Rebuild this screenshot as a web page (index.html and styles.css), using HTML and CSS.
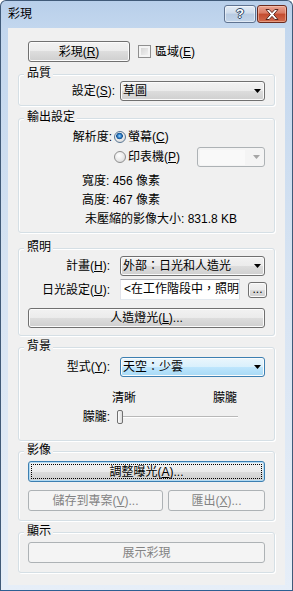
FILE: index.html
```html
<!DOCTYPE html>
<html lang="zh-Hant">
<head>
  <meta charset="UTF-8" />
  <title>彩現</title>
  <link rel="stylesheet" href="styles.css">
</head>
<body>

<div class="window">
  <div class="titlebar">
    <span class="title">彩現</span>
    <div class="caption-btns">
      <span class="cap-btn cap-help"><span class="help-glyph">?</span></span>
      <span class="cap-btn cap-close">
        <svg viewBox="0 0 14 11" width="14" height="11">
          <path d="M1 0.5h3.2L7 3.6 9.8 0.5H13L8.7 5.5 13 10.5H9.8L7 7.4 4.2 10.5H1l4.3-5z" fill="#fff" stroke="#4a1a12" stroke-width="0.9" stroke-linejoin="round"/>
        </svg>
      </span>
    </div>
  </div>

  <div class="client">
    <div class="top-row">
      <button class="btn btn-render">彩現(<u>R</u>)</button>
      <span class="checkbox"></span>
      <span class="check-text">區域(<u>E</u>)</span>
    </div>

    <!-- 品質 -->
    <section class="group group-quality">
      <div class="group-title">品質</div>
      <div class="field-row">
        <span class="label">設定(<u>S</u>):</span>
        <div class="combo">
          <span>草圖</span>
          <svg class="arrow" viewBox="0 0 7 4"><path d="M0 0h7L3.5 4z"/></svg>
        </div>
      </div>
    </section>

    <!-- 輸出設定 -->
    <section class="group group-output">
      <div class="group-title">輸出設定</div>
      <div class="res-row">
        <span class="res-label">解析度:</span>
        <span class="radio checked"></span>
        <span class="radio-text">螢幕(<u>C</u>)</span>
      </div>
      <div class="res-row">
        <span class="res-label"></span>
        <span class="radio"></span>
        <span class="radio-text">印表機(<u>P</u>)</span>
        <div class="combo combo-disabled">
          <span class="combo-well"></span>
          <svg class="arrow" viewBox="0 0 7 4"><path d="M0 0h7L3.5 4z"/></svg>
        </div>
      </div>
      <div class="info-line info-size">寬度: 456 像素</div>
      <div class="info-line info-size">高度: 467 像素</div>
      <div class="info-line info-total">未壓縮的影像大小: 831.8 KB</div>
    </section>

    <!-- 照明 -->
    <section class="group group-light">
      <div class="group-title">照明</div>
      <div class="field-row">
        <span class="label">計畫(<u>H</u>):</span>
        <div class="combo">
          <span>外部：日光和人造光</span>
          <svg class="arrow" viewBox="0 0 7 4"><path d="M0 0h7L3.5 4z"/></svg>
        </div>
      </div>
      <div class="field-row row-sun">
        <span class="label">日光設定(<u>U</u>):</span>
        <div class="sun-field">
          <div class="textbox">&lt;在工作階段中，照明</div>
          <button class="btn btn-dots">...</button>
        </div>
      </div>
      <button class="btn btn-wide btn-artificial">人造燈光(<u>L</u>)...</button>
    </section>

    <!-- 背景 -->
    <section class="group group-bg">
      <div class="group-title">背景</div>
      <div class="field-row">
        <span class="label">型式(<u>Y</u>):</span>
        <div class="combo combo-focus">
          <span>天空：少雲</span>
          <svg class="arrow" viewBox="0 0 7 4"><path d="M0 0h7L3.5 4z"/></svg>
        </div>
      </div>
      <div class="slider-labels">
        <span>清晰</span>
        <span>朦朧</span>
      </div>
      <div class="slider-row">
        <span class="slider-label">朦朧:</span>
        <div class="slider"><span class="thumb"></span></div>
      </div>
    </section>

    <!-- 影像 -->
    <section class="group group-image">
      <div class="group-title">影像</div>
      <button class="btn btn-wide btn-default">調整曝光(<u>A</u>)...</button>
      <div class="btn-pair">
        <button class="btn btn-disabled btn-save">儲存到專案(<u>V</u>)...</button>
        <button class="btn btn-disabled btn-export">匯出(<u>X</u>)...</button>
      </div>
    </section>

    <!-- 顯示 -->
    <section class="group group-show">
      <div class="group-title">顯示</div>
      <button class="btn btn-wide btn-disabled">展示彩現</button>
    </section>
  </div>
</div>

</body>
</html>
```

FILE: styles.css
```css
body {
  margin: 0;
  font-family: "Liberation Sans", "Noto Sans CJK TC", sans-serif;
  font-size: 12px;
  color: #000;
  background: #fff;
}

/* window frame */
.window {
  width: 293px;
  height: 591px;
  box-sizing: border-box;
  border: 1px solid #405a78;
  border-bottom-color: #2d5f93;
  border-radius: 6px 6px 0 0;
  background: linear-gradient(#b8cfea 0, #c3d7ee 28px, #d6e3f2 45%, #e6eef8 100%);
  padding: 0 7px 5px;
  display: flex;
  flex-direction: column;
}

.titlebar {
  height: 27px;
  display: flex;
  align-items: flex-start;
}

.title {
  margin-top: 5px;
  line-height: 16px;
}

.caption-btns {
  margin-left: auto;
  margin-right: -2px;
  margin-top: 4px;
  display: flex;
  gap: 1px;
}

.cap-btn {
  box-sizing: border-box;
  height: 18px;
  border-radius: 3px;
  display: flex;
  align-items: center;
  justify-content: center;
}

.cap-help {
  width: 32px;
  border: 1px solid #5f7391;
  background: linear-gradient(#e3ecf6 0, #cfdcec 45%, #b8cbe2 50%, #c3d5ea 100%);
  box-shadow: inset 0 0 0 1px rgba(255, 255, 255, 0.5);
}

.help-glyph {
  font-weight: bold;
  font-size: 13px;
  line-height: 14px;
  color: #fff;
  text-shadow: 1px 0 #2d4563, -1px 0 #2d4563, 0 1px #2d4563, 0 -1px #2d4563;
}

.cap-close {
  width: 30px;
  border: 1px solid #6b2a1e;
  background: linear-gradient(#eaa391 0, #d97a63 45%, #c44b2f 50%, #d16a4c 100%);
  box-shadow: inset 0 0 0 1px rgba(255, 220, 200, 0.45);
}

/* client area */
.client {
  flex: 1;
  background: #f0f0f0;
  padding: 13px 10px 0;
}

.top-row {
  display: flex;
  align-items: center;
  height: 21px;
  padding-left: 10px;
}

.btn {
  box-sizing: border-box;
  height: 21px;
  border: 1px solid #707070;
  border-radius: 3px;
  background: linear-gradient(#f2f2f2 0, #ebebeb 50%, #dddddd 50%, #cfcfcf 100%);
  box-shadow: inset 0 0 0 1px #fbfbfb;
  font: inherit;
  color: #000;
  padding: 0;
  line-height: 16px;
  display: flex;
  align-items: center;
  justify-content: center;
  white-space: nowrap;
}

.btn-render {
  width: 102px;
}

.checkbox {
  box-sizing: border-box;
  width: 13px;
  height: 13px;
  margin-left: 8px;
  border: 1px solid #8f8f8f;
  background: linear-gradient(135deg, #cfcfcf, #f7f7f7);
  box-shadow: inset 0 0 0 2px #f4f4f4;
}

.check-text {
  margin-left: 4px;
  line-height: 16px;
}

/* group boxes */
.group {
  border: 1px solid #d5dfe5;
  border-radius: 3px;
  box-shadow: inset 1px 1px 0 #fff, 1px 1px 0 #fff;
  padding: 0 9px;
}

.group-title {
  width: fit-content;
  margin: -9px 0 0 -4px;
  padding: 0 2px 0 3px;
  line-height: 14px;
  background: #f0f0f0;
}

.group-quality { margin-top: 12px; padding-bottom: 4px; }
.group-output  { margin-top: 12px; padding-bottom: 3px; }
.group-light   { margin-top: 15px; padding-bottom: 7px; }
.group-bg      { margin-top: 11px; padding-bottom: 13px; }
.group-image   { margin-top: 10px; padding-bottom: 9px; }
.group-show    { margin-top: 11px; padding-bottom: 9px; }

.field-row {
  display: grid;
  grid-template-columns: 92px 1fr;
  align-items: center;
  margin-top: 2px;
}

.group-quality .field-row { margin-top: 1px; }
.group-bg .field-row { margin-top: 4px; }

.label {
  text-align: right;
  padding-right: 10px;
  line-height: 16px;
  white-space: nowrap;
}

.group-quality .label { padding-right: 5px; }

.combo {
  box-sizing: border-box;
  height: 20px;
  border: 1px solid #707070;
  border-radius: 3px;
  background: linear-gradient(#f2f2f2 0, #ebebeb 50%, #dddddd 50%, #cfcfcf 100%);
  box-shadow: inset 0 0 0 1px #fbfbfb;
  display: flex;
  align-items: center;
  justify-content: space-between;
  padding: 0 3px 0 2px;
  line-height: 16px;
  white-space: nowrap;
}

.arrow {
  width: 7px;
  height: 4px;
  fill: #000;
  flex: none;
}

.combo-focus {
  border-color: #3c7fb1;
  background: linear-gradient(#eaf6fd 0, #d9f0fc 50%, #bee6fd 50%, #a7d9f5 100%);
}

.combo-disabled {
  width: 68px;
  margin-left: auto;
  border-color: #adb2b5;
  background: #f4f4f4;
  box-shadow: none;
  padding: 0 4px 0 2px;
}

.combo-disabled .arrow {
  fill: #a6a6a6;
}

.combo-well {
  width: 45px;
  height: 15px;
  background: #f9f9f9;
}

/* output settings */
.res-row {
  display: flex;
  align-items: center;
  height: 20px;
}

.group-output .res-row:nth-of-type(2) { margin-top: 3px; }

.res-label {
  width: 84px;
  text-align: right;
  line-height: 16px;
}

.radio {
  box-sizing: border-box;
  width: 12px;
  height: 12px;
  margin-left: 2px;
  border: 1px solid #8f8f8f;
  border-radius: 50%;
  background: radial-gradient(circle at 40% 35%, #fff 0, #e6e6e6 60%, #cfcfcf 100%);
}

.radio.checked {
  border-color: #5a7895;
  background:
    radial-gradient(circle at 45% 40%, #a8defb 0, #3f8ed6 1.5px, #114f8f 3px, transparent 3.6px),
    radial-gradient(circle at 40% 35%, #fff 0, #e6e6e6 60%, #cfcfcf 100%);
}

.radio-text {
  margin-left: 2px;
  line-height: 16px;
}

.info-line {
  line-height: 19px;
  white-space: nowrap;
}

.info-size { padding-left: 54px; }
.info-size:first-of-type, .res-row + .info-line { margin-top: 5px; }
.info-total { padding-left: 57px; }

/* lighting */
.row-sun {
  margin-top: 3px;
}

.sun-field {
  display: flex;
  align-items: center;
}

.textbox {
  box-sizing: border-box;
  flex: 1;
  height: 21px;
  border: 1px solid #abadb3;
  border-left-color: #e2e3ea;
  border-right-color: #dbdfe6;
  border-bottom-color: #e3e9ef;
  background: #fff;
  padding-left: 3px;
  line-height: 19px;
  white-space: nowrap;
  overflow: hidden;
}

.btn-dots {
  width: 19px;
  height: 16px;
  margin-left: 8px;
  margin-right: 1px;
  line-height: 12px;
  align-items: flex-end;
  padding-bottom: 2px;
}

.btn-wide {
  width: 100%;
}

.btn-artificial {
  height: 20px;
  margin-top: 8px;
}

/* background */
.slider-labels {
  display: flex;
  justify-content: space-between;
  width: 125px;
  margin: 13px 0 0 84px;
  line-height: 16px;
}

.slider-row {
  display: flex;
  align-items: center;
  height: 20px;
  margin-top: 1px;
}

.slider-label {
  width: 82px;
  text-align: right;
  line-height: 16px;
}

.slider {
  width: 121px;
  height: 14px;
  margin-left: 7px;
  display: flex;
  align-items: center;
  background: linear-gradient(transparent 6px, #b8b8b8 6px, #b8b8b8 7px, #fff 7px, #fff 8px, transparent 8px);
}

.thumb {
  box-sizing: border-box;
  width: 6px;
  height: 14px;
  border: 1px solid #707070;
  border-radius: 2px;
  background: linear-gradient(90deg, #fdfdfd, #dcdcdc);
}

/* image */
.btn-default {
  margin-top: 4px;
  border-color: #3c7fb1;
  box-shadow: inset 0 0 0 1px #b3dbf3;
  outline: 1px dotted #000;
  outline-offset: -4px;
}

.btn-pair {
  display: flex;
  gap: 5px;
  margin-top: 8px;
}

.btn-disabled {
  border-color: #adb2b5;
  background: #f4f4f4;
  box-shadow: none;
  color: #838383;
}

.btn-save {
  width: 135px;
}

.btn-export {
  flex: 1;
}

.group-show .btn {
  margin-top: 4px;
}
```
